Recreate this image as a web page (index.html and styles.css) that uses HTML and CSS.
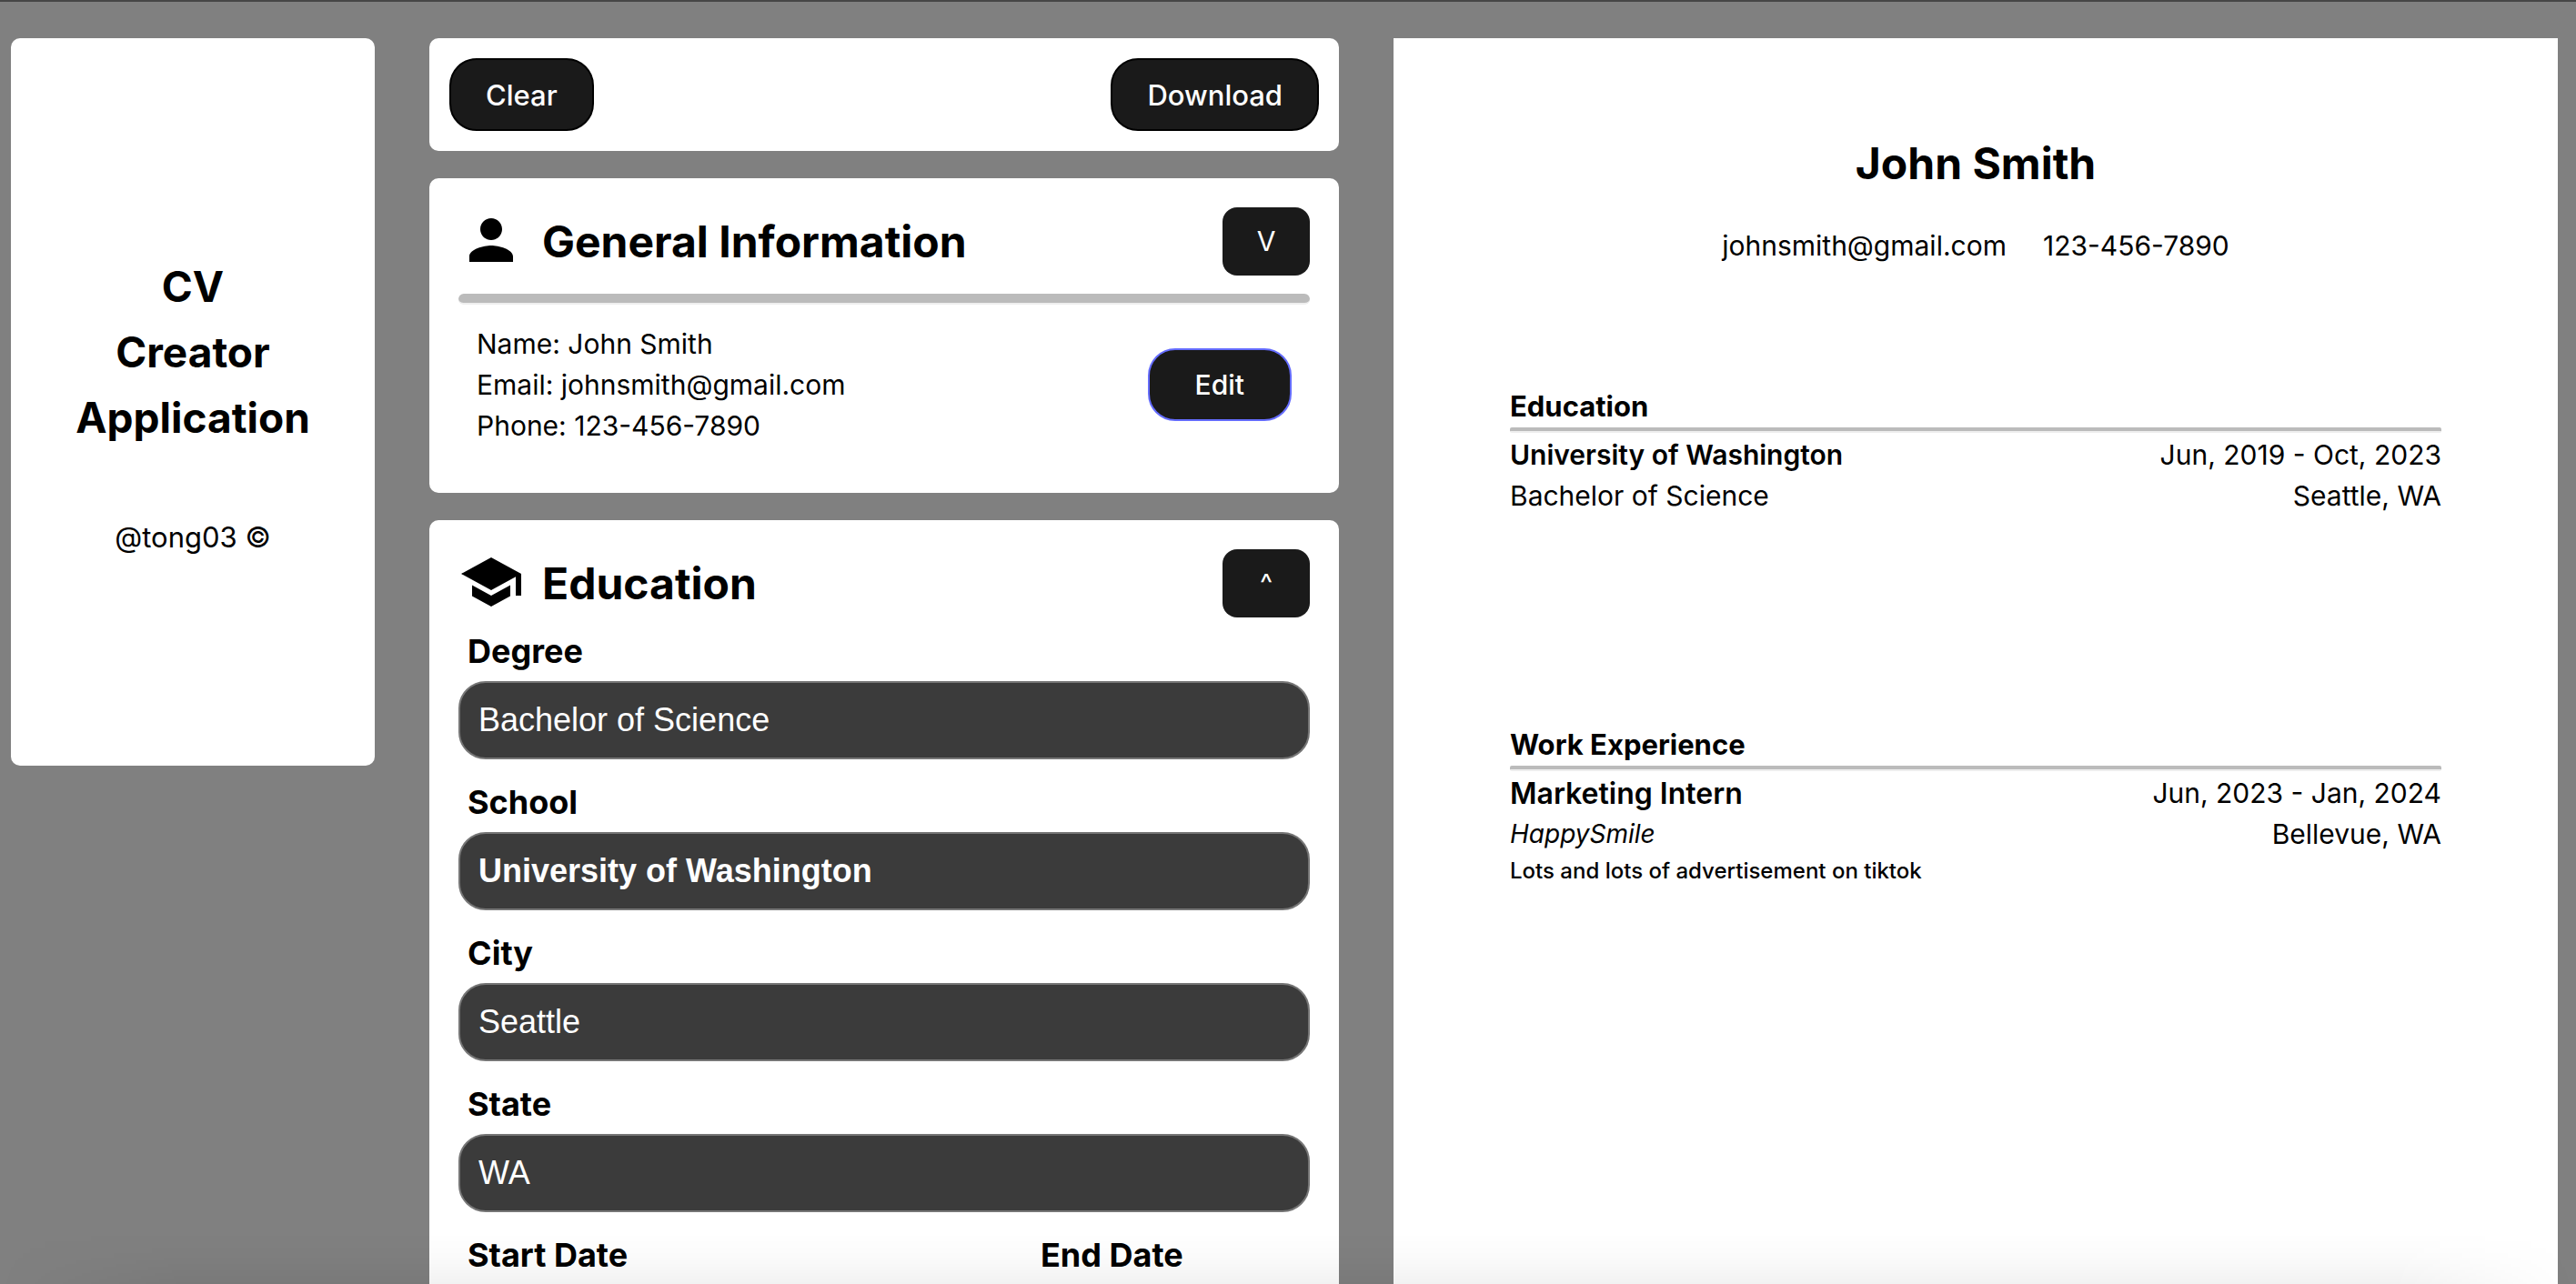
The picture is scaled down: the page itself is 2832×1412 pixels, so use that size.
FILE: index.html
```html
<!DOCTYPE html>
<html lang="en">
<head>
  <meta charset="utf-8">
  <title>CV Creator Application</title>
  <link rel="stylesheet" href="styles.css">
</head>
<body>
  <div class="app">
    <aside class="card sidebar">
      <h1 class="sidebar-title">CV<br>Creator<br>Application</h1>
      <p class="sidebar-author">@tong03 ©</p>
    </aside>

    <main class="editor">
      <div class="card toolbar">
        <button type="button" class="button">Clear</button>
        <button type="button" class="button">Download</button>
      </div>

      <section class="card panel">
        <header class="panel-header">
          <svg class="icon" viewBox="0 0 24 24" aria-hidden="true"><path d="M12 12c2.210 0 4-1.790 4-4s-1.790-4-4-4-4 1.790-4 4 1.790 4 4 4zm0 2c-2.670 0-8 1.340-8 4v2h16v-2c0-2.660-5.330-4-8-4z"/></svg>
          <h2 class="panel-title">General Information</h2>
          <button type="button" class="toggle">V</button>
        </header>
        <hr class="rule rule-thick">
        <div class="summary">
          <div class="summary-text">
            <p>Name: John Smith</p>
            <p>Email: johnsmith@gmail.com</p>
            <p>Phone: 123-456-7890</p>
          </div>
          <button type="button" class="button button-edit">Edit</button>
        </div>
      </section>

      <section class="card panel">
        <header class="panel-header">
          <svg class="icon" viewBox="0 0 24 24" aria-hidden="true"><path d="M5 13.180v4L12 21l7-3.820v-4L12 17l-7-3.820zM12 3L1 9l11 6 9-4.910V17h2V9L12 3z"/></svg>
          <h2 class="panel-title">Education</h2>
          <button type="button" class="toggle">^</button>
        </header>
        <form class="form">
          <div class="field">
            <label for="degree">Degree</label>
            <input id="degree" type="text" value="Bachelor of Science">
          </div>
          <div class="field">
            <label for="school">School</label>
            <input id="school" class="strong" type="text" value="University of Washington">
          </div>
          <div class="field">
            <label for="city">City</label>
            <input id="city" type="text" value="Seattle">
          </div>
          <div class="field">
            <label for="state">State</label>
            <input id="state" type="text" value="WA">
          </div>
          <div class="dates">
            <div class="field">
              <label for="start">Start Date</label>
              <input id="start" type="text" value="Jun, 2019">
            </div>
            <div class="field">
              <label for="end">End Date</label>
              <input id="end" type="text" value="Oct, 2023">
            </div>
          </div>
        </form>
      </section>
    </main>

    <article class="resume">
      <h2 class="resume-name">John Smith</h2>
      <p class="resume-contact"><span>johnsmith@gmail.com</span><span>123-456-7890</span></p>
      <section class="resume-section">
        <h3>Education</h3>
        <hr class="rule">
        <p class="row"><strong>University of Washington</strong><span>Jun, 2019 - Oct, 2023</span></p>
        <p class="row"><span>Bachelor of Science</span><span>Seattle, WA</span></p>
      </section>
      <section class="resume-section">
        <h3>Work Experience</h3>
        <hr class="rule">
        <p class="row"><strong class="role">Marketing Intern</strong><span>Jun, 2023 - Jan, 2024</span></p>
        <p class="row"><em>HappySmile</em><span>Bellevue, WA</span></p>
        <p class="details">Lots and lots of advertisement on tiktok</p>
      </section>
    </article>
  </div>
</body>
</html>
```

FILE: styles.css
```css
* {
  box-sizing: border-box;
}

body {
  margin: 0;
  height: 100vh;
  overflow: hidden;
  border-top: 2px solid #464646;
  background: #808080;
  color: #000;
  font-family: Inter, "Liberation Sans", sans-serif;
  font-size: 30px;
  font-weight: 400;
  line-height: 45px;
}

/* soft shade along the bottom edge of the window */
body::after {
  content: "";
  position: fixed;
  inset: auto 0 0;
  height: 56px;
  background: linear-gradient(rgba(0, 0, 0, 0), rgba(0, 0, 0, 0.015) 45%, rgba(0, 0, 0, 0.05));
  mask-image: linear-gradient(90deg, transparent, #000 200px, #000 calc(100% - 200px), transparent);
  pointer-events: none;
}

h1, h2, h3, p {
  margin: 0;
}

h1, h2 {
  font-size: 48px;
  font-weight: 700;
  line-height: 72px;
}

.app {
  display: grid;
  grid-template-columns: 400fr 1000fr 1280fr;
  align-items: start;
  gap: 60px;
  padding: 40px 20px 40px 12px;
}

.card {
  background: #fff;
  border-radius: 10px;
}

.sidebar {
  display: flex;
  flex-direction: column;
  justify-content: center;
  align-items: center;
  gap: 72px;
  min-height: 800px;
  padding: 42px 32px 32px;
  text-align: center;
}

.sidebar-title {
  font-size: 46px;
}

.sidebar-author {
  font-size: 31px;
  line-height: 48px;
}

.editor {
  display: flex;
  flex-direction: column;
  gap: 30px;
}

.toolbar {
  display: flex;
  justify-content: space-between;
  padding: 22px;
}

.button {
  height: 80px;
  padding: 0 38px;
  border: 2px solid #000;
  border-radius: 30px;
  background: #1a1a1a;
  color: #fff;
  font: 500 31px/45px Inter, "Liberation Sans", sans-serif;
}

.button-edit {
  padding: 0 50px;
  border-color: #646cff;
  font-size: 30px;
}

.panel {
  padding: 32px;
}

.panel-header {
  display: flex;
  align-items: center;
  gap: 20px;
}

.icon {
  width: 72px;
  height: 72px;
  margin-bottom: 3px;
}

.panel-title {
  flex: 1;
}

.toggle {
  width: 96px;
  height: 75px;
  padding: 0;
  border: 0;
  border-radius: 16px;
  background: #1a1a1a;
  color: #fff;
  font: 400 30px/45px Inter, "Liberation Sans", sans-serif;
}

.rule {
  height: 6px;
  margin: 0 0 2px;
  border: 0;
  border-bottom: 2px solid #eee;
  border-radius: 2px;
  background: #bbb;
}

.rule-thick {
  height: 12px;
  margin: 20px 0;
  border-radius: 6px;
}

.summary {
  display: flex;
  justify-content: space-between;
  align-items: center;
  padding: 0 20px 19px;
}

.summary-text {
  padding-top: 1px;
}

.form {
  display: flex;
  flex-direction: column;
  gap: 20px;
  padding-top: 10px;
}

.field {
  display: flex;
  flex-direction: column;
  gap: 6px;
}

.field label {
  padding-left: 10px;
  font-size: 36px;
  font-weight: 700;
  line-height: 54px;
}

.field input {
  width: 100%;
  height: 86px;
  padding: 0 20px;
  border: 2px solid #767676;
  border-radius: 30px;
  background: #3b3b3b;
  color: #fff;
  font: 400 36px/42px "Liberation Sans", Arial, sans-serif;
}

.field .strong {
  font-weight: 700;
}

.dates {
  display: grid;
  grid-template-columns: 2fr 1fr;
  gap: 18px;
}

.resume {
  min-height: 1810px;
  padding: 102px 10%;
  background: #fff;
}

.resume-name {
  text-align: center;
}

.resume-contact {
  display: flex;
  justify-content: center;
  gap: 40px;
  padding: 32px 0 131px;
}

.resume-section {
  min-height: 372px;
}

.resume h3 {
  font-size: 31px;
  font-weight: 700;
  line-height: 46px;
}

.resume strong {
  font-weight: 600;
}

.resume .role {
  font-size: 32px;
}

.resume em {
  font-size: 28px;
}

.row {
  display: flex;
  justify-content: space-between;
}

.details {
  font-size: 24px;
  font-weight: 500;
  line-height: 36px;
}
```
